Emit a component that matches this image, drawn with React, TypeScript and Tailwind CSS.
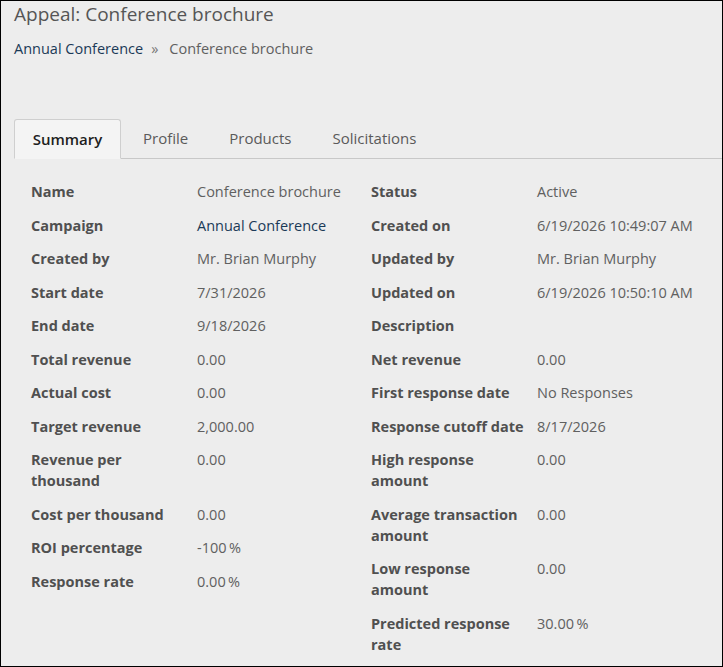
import React from "react";

type Field = { label: string; value: string; link?: boolean };

const left: Field[] = [
  { label: "Name", value: "Conference brochure" },
  { label: "Campaign", value: "Annual Conference", link: true },
  { label: "Created by", value: "Mr. Brian Murphy" },
  { label: "Start date", value: "7/31/2026" },
  { label: "End date", value: "9/18/2026" },
  { label: "Total revenue", value: "0.00" },
  { label: "Actual cost", value: "0.00" },
  { label: "Target revenue", value: "2,000.00" },
  { label: "Revenue per thousand", value: "0.00" },
  { label: "Cost per thousand", value: "0.00" },
  { label: "ROI percentage", value: "-100\u2009%" },
  { label: "Response rate", value: "0.00\u2009%" },
];

const right: Field[] = [
  { label: "Status", value: "Active" },
  { label: "Created on", value: "6/19/2026 10:49:07 AM" },
  { label: "Updated by", value: "Mr. Brian Murphy" },
  { label: "Updated on", value: "6/19/2026 10:50:10 AM" },
  { label: "Description", value: "" },
  { label: "Net revenue", value: "0.00" },
  { label: "First response date", value: "No Responses" },
  { label: "Response cutoff date", value: "8/17/2026" },
  { label: "High response amount", value: "0.00" },
  { label: "Average transaction amount", value: "0.00" },
  { label: "Low response amount", value: "0.00" },
  { label: "Predicted response rate", value: "30.00\u2009%" },
];

function FieldList({ fields }: { fields: Field[] }) {
  return (
    <dl className="flex flex-col gap-y-[12.5px]">
      {fields.map((f) => (
        <div key={f.label} className="flex">
          <dt className="w-[166px] shrink-0 pr-[6px] font-bold text-[#505050]">
            {f.label}
          </dt>
          <dd className={f.link ? "text-[#1b3a57]" : "text-[#606060]"}>
            {f.value}
          </dd>
        </div>
      ))}
    </dl>
  );
}

export default function App() {
  const tabs = ["Profile", "Products", "Solicitations"];
  return (
    <div
      className="h-[667px] w-[723px] overflow-hidden border border-black bg-[#ededed] text-[14.5px] leading-[21px]"
      style={{ fontFamily: '"Open Sans", "Noto Sans", sans-serif' }}
    >
      <h1 className="pl-[13px] pt-[1px] text-[19px] leading-[24px] text-[#555555]">
        Appeal: Conference brochure
      </h1>
      <div className="mt-[12px] flex items-center pl-[13px] text-[#606060]">
        <a className="text-[#1b3a57]">Annual Conference</a>
        <span className="pl-[8px] pr-[11px] text-[#777777]">»</span>
        <span>Conference brochure</span>
      </div>

      <div className="ml-[13px] mt-[60px] flex h-[40px] items-end border-b border-[#c8c8c8]">
        <div className="-mb-px flex h-[40px] w-[107px] items-center justify-center rounded-t-[3px] border border-b-[#f4f4f4] border-[#cfcfcf] bg-[#f4f4f4] text-[15px] font-semibold text-[#1e1e1e]">
          Summary
        </div>
        <div className="flex h-[39px] items-center gap-[41px] pl-[22px] text-[15px] text-[#5a5a5a]">
          {tabs.map((t) => (
            <span key={t}>{t}</span>
          ))}
        </div>
      </div>

      <div className="mt-[22px] grid grid-cols-[340px_1fr] pl-[30px]">
        <FieldList fields={left} />
        <FieldList fields={right} />
      </div>
    </div>
  );
}
